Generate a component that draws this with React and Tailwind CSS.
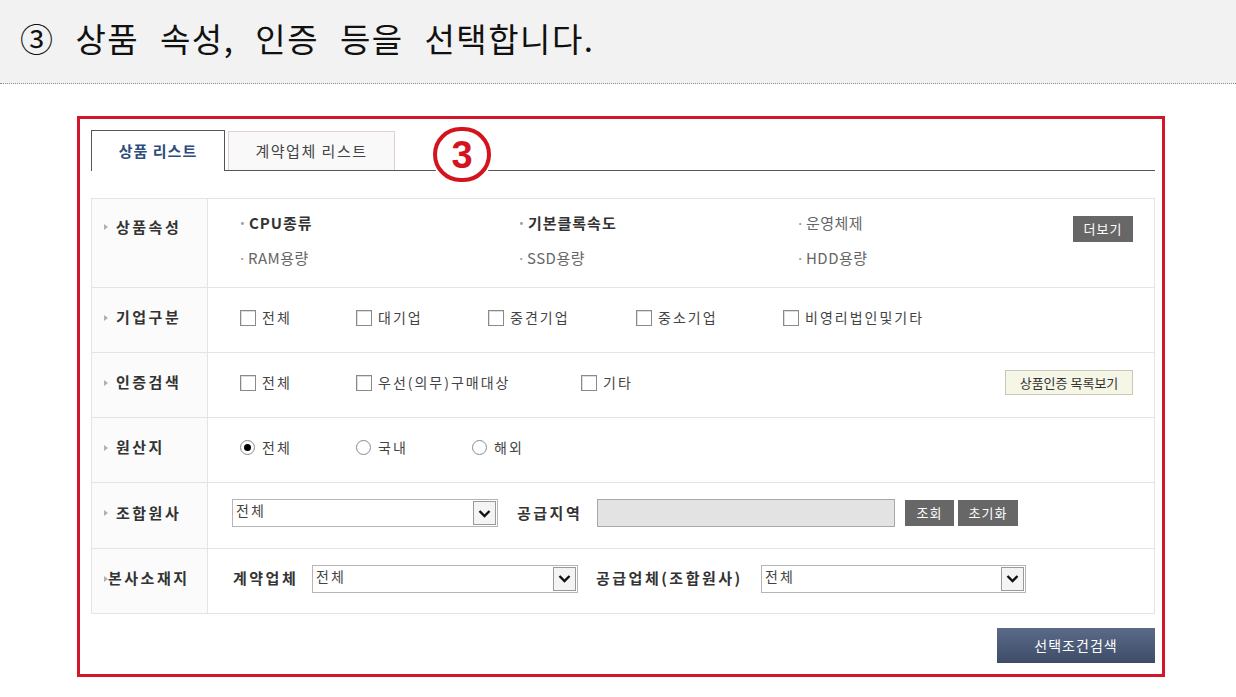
import React from 'react';

const font = "font-['Noto_Sans_CJK_KR','Noto_Sans',sans-serif]";

function Label({ children, tight, top }) {
  return (
    <div
      className={`flex w-[116px] shrink-0 border-r border-[#e4e4e4] bg-[#fbfbfb] pl-[12px] ${
        top ? 'items-start pt-[17px]' : 'items-center pb-[5px]'
      }`}
    >
      <span
        className={`h-0 w-0 border-y-[3px] border-l-[4px] border-y-transparent border-l-[#b0b0b0] ${
          top ? 'mt-[8px]' : ''
        } ${tight ? 'mr-[0px]' : 'mr-[8px]'}`}
      />
      <span className="text-[15px] font-bold tracking-[2.5px] text-[#333]">{children}</span>
    </div>
  );
}

function Row({ label, tight, top, className = '', children }) {
  return (
    <div className={`flex border-b border-[#e4e4e4] ${className}`}>
      <Label tight={tight} top={top}>
        {label}
      </Label>
      <div className={`flex flex-1 items-center ${top ? '' : 'pb-[5px]'}`}>{children}</div>
    </div>
  );
}

function Check({ label, width }) {
  return (
    <label className={`flex items-center ${width}`}>
      <span className="h-[16px] w-[16px] border border-[#8a8a8a] bg-white shadow-[inset_1px_1px_0_#ddd]" />
      <span className="ml-[6px] text-[14px] tracking-[2px] text-[#444]">{label}</span>
    </label>
  );
}

function Radio({ label, width, checked }) {
  return (
    <label className={`flex items-center ${width}`}>
      <span className="flex h-[15px] w-[15px] items-center justify-center rounded-full border border-[#8a8a8a] bg-white">
        {checked && <span className="h-[7px] w-[7px] rounded-full bg-black" />}
      </span>
      <span className="ml-[7px] text-[14px] tracking-[2px] text-[#444]">{label}</span>
    </label>
  );
}

function Select({ width }) {
  return (
    <div className={`flex h-[28px] shrink-0 border border-[#b5b5b5] bg-white ${width}`}>
      <span className="flex-1 pl-[3px] text-[14px] leading-[20px] tracking-[2px] text-[#444]">전체</span>
      <span className="my-[1px] mr-[1px] flex w-[23px] items-center justify-center border border-[#9a9a9a] bg-[#f4f4f4]">
        <svg width="13" height="9" viewBox="0 0 13 9">
          <path d="M1.5 2 L6.5 7 L11.5 2" fill="none" stroke="#111" strokeWidth="2.4" />
        </svg>
      </span>
    </div>
  );
}

function Attr({ text, bold }) {
  return (
    <span className={`text-[15px] leading-[21px] ${bold ? 'font-bold tracking-[1px] text-[#333]' : 'tracking-[0.5px] text-[#666]'}`}>
      <span className="mr-[1px] text-[#999]">·</span>
      {text}
    </span>
  );
}

function DarkButton({ children, className = '' }) {
  return (
    <button className={`flex h-[26px] shrink-0 items-center justify-center bg-[#676767] text-[13px] tracking-[1px] text-white ${className}`}>
      {children}
    </button>
  );
}

function Field({ children, className = '' }) {
  return (
    <span className={`shrink-0 whitespace-nowrap text-[15px] font-bold tracking-[2.5px] text-[#333] ${className}`}>
      {children}
    </span>
  );
}

export default function App() {
  return (
    <div className={`h-[697px] w-[1236px] overflow-hidden bg-white ${font}`}>
      <header className="flex h-[84px] items-center border-b border-dotted border-[#8c8c8c] bg-[#f2f2f2] pb-[6px] pl-[20px]">
        <h1 className="text-[33px] font-normal leading-none tracking-[1.5px] text-[#111] [word-spacing:12px]">
          ③ 상품 속성, 인증 등을 선택합니다.
        </h1>
      </header>

      <div className="pl-[77px] pt-[32px]">
        <div className="h-[561px] w-[1088px] border-[3px] border-[#d3162a] pl-[11px] pr-[7px] pt-[11px]">
          {/* tabs */}
          <div className="relative flex h-[41px] items-end border-b border-[#555]">
            <div className="-mb-px flex h-[41px] w-[134px] items-center justify-center border border-b-0 border-[#555] bg-white text-[15px] font-bold tracking-[1px] text-[#2d4b7d]">
              상품 리스트
            </div>
            <div className="ml-[3px] flex h-[39px] w-[167px] items-center justify-center border border-b-0 border-[#e2cfd6] bg-[#f9f9f9] text-[15px] tracking-[1.5px] text-[#444]">
              계약업체 리스트
            </div>
            <div className="absolute left-[342px] top-[-3px] flex h-[55px] w-[58px] items-center justify-center rounded-full border-[4px] border-[#d3141f] bg-white shadow-[0_0_0_2px_#fff]">
              <span className="font-['Liberation_Sans',sans-serif] text-[38px] font-bold leading-none text-[#d3141f]">3</span>
            </div>
          </div>

          {/* search table */}
          <div className="mt-[27px] w-[1064px] border border-b-0 border-[#e4e4e4]">
            <Row label="상품속성" top className="h-[89px]">
              <div className="flex flex-1 items-center pb-[6px] pl-[30px] pr-[21px]">
                <div className="grid flex-1 grid-cols-[279px_279px_1fr] gap-y-[14px]">
                  <Attr text="CPU종류" bold />
                  <Attr text="기본클록속도" bold />
                  <Attr text="운영체제" />
                  <Attr text="RAM용량" />
                  <Attr text="SSD용량" />
                  <Attr text="HDD용량" />
                </div>
                <DarkButton className="mb-[22px] w-[60px]">더보기</DarkButton>
              </div>
            </Row>

            <Row label="기업구분" className="h-[65px]">
              <div className="flex pl-[32px]">
                <Check label="전체" width="w-[116px]" />
                <Check label="대기업" width="w-[132px]" />
                <Check label="중견기업" width="w-[148px]" />
                <Check label="중소기업" width="w-[147px]" />
                <Check label="비영리법인및기타" width="" />
              </div>
            </Row>

            <Row label="인증검색" className="h-[65px]">
              <div className="flex flex-1 items-center pl-[32px] pr-[21px]">
                <Check label="전체" width="w-[116px]" />
                <Check label="우선(의무)구매대상" width="w-[225px]" />
                <Check label="기타" width="" />
                <button className="ml-auto h-[25px] w-[128px] border border-[#c9c9b8] bg-[#f5f6e6] text-[13px] text-[#333]">
                  상품인증 목록보기
                </button>
              </div>
            </Row>

            <Row label="원산지" className="h-[65px]">
              <div className="flex pl-[32px]">
                <Radio label="전체" width="w-[116px]" checked />
                <Radio label="국내" width="w-[116px]" />
                <Radio label="해외" width="" />
              </div>
            </Row>

            <Row label="조합원사" className="h-[66px]">
              <div className="flex items-center pl-[24px]">
                <Select width="w-[266px]" />
                <Field className="ml-[19px] w-[68px]">공급지역</Field>
                <div className="ml-[12px] h-[28px] w-[298px] shrink-0 border border-[#a8a8a8] bg-[#e3e3e3]" />
                <DarkButton className="ml-[10px] w-[49px]">조회</DarkButton>
                <DarkButton className="ml-[4px] w-[60px]">초기화</DarkButton>
              </div>
            </Row>

            <Row label="본사소재지" tight className="h-[65px]">
              <div className="flex items-center pl-[25px]">
                <Field className="w-[68px]">계약업체</Field>
                <Select width="ml-[11px] w-[266px]" />
                <Field className="ml-[18px] w-[155px]">공급업체(조합원사)</Field>
                <Select width="ml-[10px] w-[265px]" />
              </div>
            </Row>
          </div>

          <div className="mt-[14px] flex w-[1064px] justify-end">
            <button className="h-[35px] w-[158px] bg-gradient-to-b from-[#5a6a88] to-[#3e4c68] text-[14px] tracking-[1px] text-white">
              선택조건검색
            </button>
          </div>
        </div>
      </div>
    </div>
  );
}
